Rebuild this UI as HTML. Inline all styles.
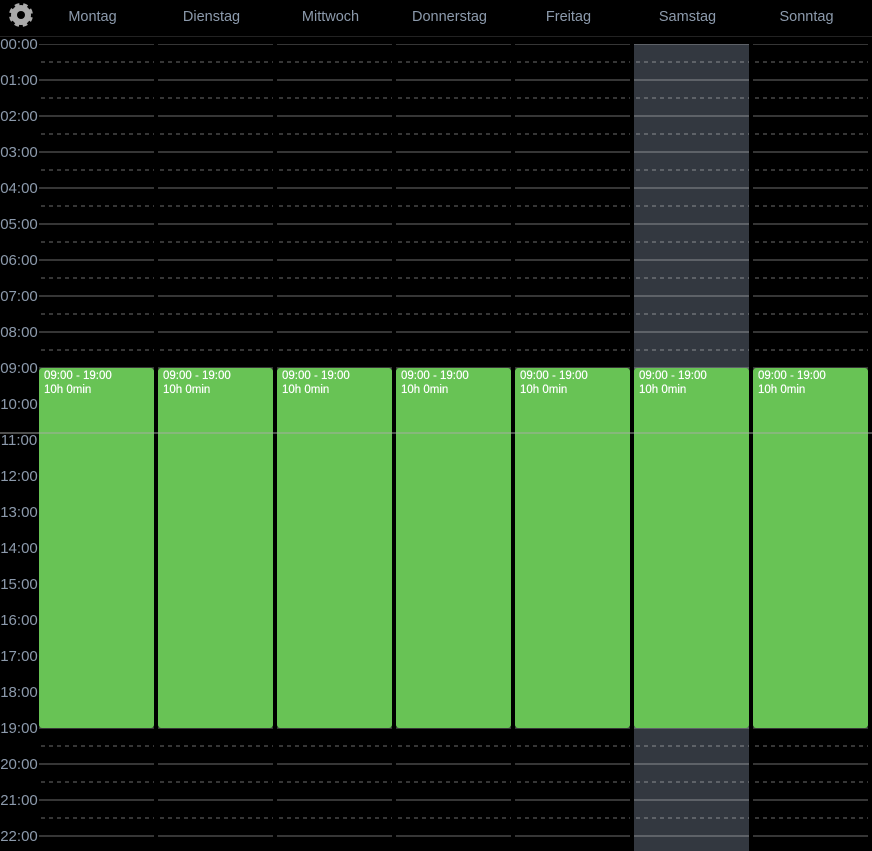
<!DOCTYPE html>
<html lang="de">
<head>
<meta charset="utf-8">
<title>Wochenplan</title>
<style>
html,body{margin:0;padding:0;background:#000;}
body{width:872px;height:851px;position:relative;overflow:hidden;font-family:"Liberation Sans",sans-serif;}
svg.bg{position:absolute;left:0;top:0;}
.h{position:absolute;top:9px;width:115px;text-align:center;color:#8c9aac;font-size:14.5px;line-height:16px;}
.t{position:absolute;left:0;width:38px;text-align:center;color:#8c9aac;font-size:15px;line-height:16px;}
.s{position:absolute;top:368px;width:115px;height:360px;background:#68c355;border-radius:3px;color:#fff;font-size:11.5px;line-height:14px;box-sizing:border-box;padding:1px 0 0 5px;text-shadow:0 0 .4px #fff;}
.now{position:absolute;left:0;top:432px;width:872px;height:1.5px;background:rgba(170,170,170,.45);}
</style>
</head>
<body>
<svg class="bg" width="872" height="851" viewBox="0 0 872 851">
<defs>
<pattern id="p" patternUnits="userSpaceOnUse" x="2" y="-1" width="8" height="36">
<rect x="-1" y="0" width="10" height="2" fill="rgba(255,255,255,.21)"/>
<rect x="0" y="18" width="4" height="2" fill="rgba(255,255,255,.21)"/>
</pattern>
</defs>
<rect x="0" y="36" width="872" height="1" fill="#222"/>
<rect x="634" y="44" width="115" height="807" fill="#333840"/>
<g transform="translate(39,44)"><rect width="115" height="807" fill="url(#p)"/></g>
<g transform="translate(158,44)"><rect width="115" height="807" fill="url(#p)"/></g>
<g transform="translate(277,44)"><rect width="115" height="807" fill="url(#p)"/></g>
<g transform="translate(396,44)"><rect width="115" height="807" fill="url(#p)"/></g>
<g transform="translate(515,44)"><rect width="115" height="807" fill="url(#p)"/></g>
<g transform="translate(634,44)"><rect width="115" height="807" fill="url(#p)"/></g>
<g transform="translate(753,44)"><rect width="115" height="807" fill="url(#p)"/></g>
<g transform="rotate(22.5 21 15)">
<circle cx="21" cy="15" r="10" fill="#aaa"/>
<circle cx="21" cy="15" r="10.5" fill="none" stroke="#aaa" stroke-width="3" stroke-dasharray="4.6 3.64" stroke-dashoffset="2.3"/>
</g>
<circle cx="21" cy="15" r="4" fill="#000"/>
</svg>

<div class="h" style="left:35px">Montag</div>
<div class="h" style="left:154px">Dienstag</div>
<div class="h" style="left:273px">Mittwoch</div>
<div class="h" style="left:392px">Donnerstag</div>
<div class="h" style="left:511px">Freitag</div>
<div class="h" style="left:630px">Samstag</div>
<div class="h" style="left:749px">Sonntag</div>

<div class="t" style="top:37px">00:00</div>
<div class="t" style="top:73px">01:00</div>
<div class="t" style="top:109px">02:00</div>
<div class="t" style="top:145px">03:00</div>
<div class="t" style="top:181px">04:00</div>
<div class="t" style="top:217px">05:00</div>
<div class="t" style="top:253px">06:00</div>
<div class="t" style="top:289px">07:00</div>
<div class="t" style="top:325px">08:00</div>
<div class="t" style="top:361px">09:00</div>
<div class="t" style="top:397px">10:00</div>
<div class="t" style="top:433px">11:00</div>
<div class="t" style="top:469px">12:00</div>
<div class="t" style="top:505px">13:00</div>
<div class="t" style="top:541px">14:00</div>
<div class="t" style="top:577px">15:00</div>
<div class="t" style="top:613px">16:00</div>
<div class="t" style="top:649px">17:00</div>
<div class="t" style="top:685px">18:00</div>
<div class="t" style="top:721px">19:00</div>
<div class="t" style="top:757px">20:00</div>
<div class="t" style="top:793px">21:00</div>
<div class="t" style="top:829px">22:00</div>

<div class="s" style="left:39px">09:00 - 19:00<br>10h 0min</div>
<div class="s" style="left:158px">09:00 - 19:00<br>10h 0min</div>
<div class="s" style="left:277px">09:00 - 19:00<br>10h 0min</div>
<div class="s" style="left:396px">09:00 - 19:00<br>10h 0min</div>
<div class="s" style="left:515px">09:00 - 19:00<br>10h 0min</div>
<div class="s" style="left:634px">09:00 - 19:00<br>10h 0min</div>
<div class="s" style="left:753px">09:00 - 19:00<br>10h 0min</div>

<div class="now"></div>
</body>
</html>
